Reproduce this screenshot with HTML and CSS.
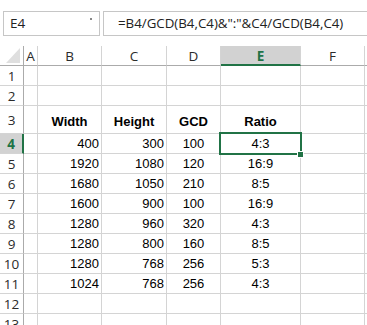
FILE: index.html
```html
<!DOCTYPE html>
<html>
<head>
<meta charset="utf-8">
<link rel="stylesheet" href="styles.css">
</head>
<body>
<div class="bar">
  <div class="namebox"><span>E4</span><span class="drop"></span></div>
  <div class="formula">=B4/GCD(B4,C4)&amp;":"&amp;C4/GCD(B4,C4)</div>
</div>
<div class="sheet">
  <div class="ch corner"><span class="tri"></span></div>
  <div class="ch">A</div><div class="ch">B</div><div class="ch">C</div><div class="ch">D</div><div class="ch sel">E</div><div class="ch">F</div><div class="ch"></div>

  <div class="rh">1</div><div class="c"></div><div class="c"></div><div class="c"></div><div class="c"></div><div class="c"></div><div class="c"></div><div class="c"></div>
  <div class="rh">2</div><div class="c"></div><div class="c"></div><div class="c"></div><div class="c"></div><div class="c"></div><div class="c"></div><div class="c"></div>
  <div class="rh">3</div><div class="c"></div><div class="c b mid">Width</div><div class="c b mid">Height</div><div class="c b mid">GCD</div><div class="c b mid">Ratio</div><div class="c"></div><div class="c"></div>
  <div class="rh rsel">4</div><div class="c"></div><div class="c r">400</div><div class="c r">300</div><div class="c mid">100</div><div class="c mid active">4:3<span class="outline"></span><span class="handle"></span></div><div class="c"></div><div class="c"></div>
  <div class="rh">5</div><div class="c"></div><div class="c r">1920</div><div class="c r">1080</div><div class="c mid">120</div><div class="c mid">16:9</div><div class="c"></div><div class="c"></div>
  <div class="rh">6</div><div class="c"></div><div class="c r">1680</div><div class="c r">1050</div><div class="c mid">210</div><div class="c mid">8:5</div><div class="c"></div><div class="c"></div>
  <div class="rh">7</div><div class="c"></div><div class="c r">1600</div><div class="c r">900</div><div class="c mid">100</div><div class="c mid">16:9</div><div class="c"></div><div class="c"></div>
  <div class="rh">8</div><div class="c"></div><div class="c r">1280</div><div class="c r">960</div><div class="c mid">320</div><div class="c mid">4:3</div><div class="c"></div><div class="c"></div>
  <div class="rh">9</div><div class="c"></div><div class="c r">1280</div><div class="c r">800</div><div class="c mid">160</div><div class="c mid">8:5</div><div class="c"></div><div class="c"></div>
  <div class="rh">10</div><div class="c"></div><div class="c r">1280</div><div class="c r">768</div><div class="c mid">256</div><div class="c mid">5:3</div><div class="c"></div><div class="c"></div>
  <div class="rh">11</div><div class="c"></div><div class="c r">1024</div><div class="c r">768</div><div class="c mid">256</div><div class="c mid">4:3</div><div class="c"></div><div class="c"></div>
  <div class="rh">12</div><div class="c"></div><div class="c"></div><div class="c"></div><div class="c"></div><div class="c"></div><div class="c"></div><div class="c"></div>
  <div class="rh">13</div><div class="c"></div><div class="c"></div><div class="c"></div><div class="c"></div><div class="c"></div><div class="c"></div><div class="c"></div>
</div>
</body>
</html>
```
FILE: styles.css
```css
html, body {
  margin: 0;
  padding: 0;
  background: #ffffff;
  overflow: hidden;
  width: 367px;
  height: 325px;
}
body {
  font-family: "Open Sans", "Liberation Sans", sans-serif;
  color: #000;
}
.bar {
  display: flex;
  gap: 3px;
  padding: 11px 0 0 3px;
  height: 25px;
  margin-bottom: 10px;
  width: 380px;
}
.namebox {
  box-sizing: border-box;
  width: 97px;
  height: 25px;
  border: 1px solid #c6c6c6;
  display: flex;
  align-items: center;
  justify-content: space-between;
  padding: 0 7px 1px 6px;
  font-size: 13.5px;
  color: #222;
}
.drop {
  width: 2px;
  height: 2px;
  background: #888;
  margin-top: -8px;
}
.formula {
  box-sizing: border-box;
  flex: 1;
  height: 25px;
  border: 1px solid #c6c6c6;
  display: flex;
  align-items: center;
  padding: 0 0 1px 14px;
  font-size: 13.3px;
  color: #222;
  white-space: nowrap;
}
.sheet {
  display: grid;
  grid-template-columns: 24px 14px 64px 65px 54px 80px 64px 10px;
  grid-template-rows: 20px 20px 20px 28px repeat(10, 20px);
  font-family: "Liberation Sans", Arial, sans-serif;
  font-size: 13px;
}
.sheet > div {
  box-sizing: border-box;
  border-right: 1px solid #d4d4d4;
  border-bottom: 1px solid #d4d4d4;
}
.ch {
  display: flex;
  align-items: center;
  justify-content: center;
  font-family: "Open Sans", "Liberation Sans", sans-serif;
  font-size: 13.5px;
  color: #2b2b2b;
  padding-top: 1px;
  border-bottom-color: #ababab !important;
}
.corner {
  position: relative;
  border-right-color: #ababab !important;
}
.tri {
  position: absolute;
  right: 3px;
  bottom: 2px;
  width: 0;
  height: 0;
  border-left: 14px solid transparent;
  border-bottom: 15px solid #dfdfdf;
}
.ch.sel {
  background: #d2d2d2;
  color: #217346;
  font-weight: bold;
  border-bottom: 2px solid #217346 !important;
}
.rh {
  display: flex;
  align-items: center;
  justify-content: center;
  font-family: "Open Sans", "Liberation Sans", sans-serif;
  font-size: 13.5px;
  color: #2b2b2b;
  border-right-color: #ababab !important;
  padding-top: 1px;
}
.rh.rsel {
  background: #d2d2d2;
  color: #217346;
  font-weight: bold;
  border-right: 2px solid #217346 !important;
}
.c {
  display: flex;
  align-items: flex-end;
  padding: 0 2px 1px 2px;
  line-height: 16px;
  white-space: nowrap;
}
.c.r { justify-content: flex-end; }
.c.mid { justify-content: center; }
.c.b { font-weight: bold; padding-bottom: 3px; }
.active { position: relative; }
.outline {
  position: absolute;
  top: -2px;
  left: -2px;
  right: -2px;
  bottom: -2px;
  border: 2px solid #217346;
}
.handle {
  position: absolute;
  left: 76px;
  top: 17px;
  width: 5px;
  height: 5px;
  background: #217346;
  border: 1px solid #fff;
}
```
